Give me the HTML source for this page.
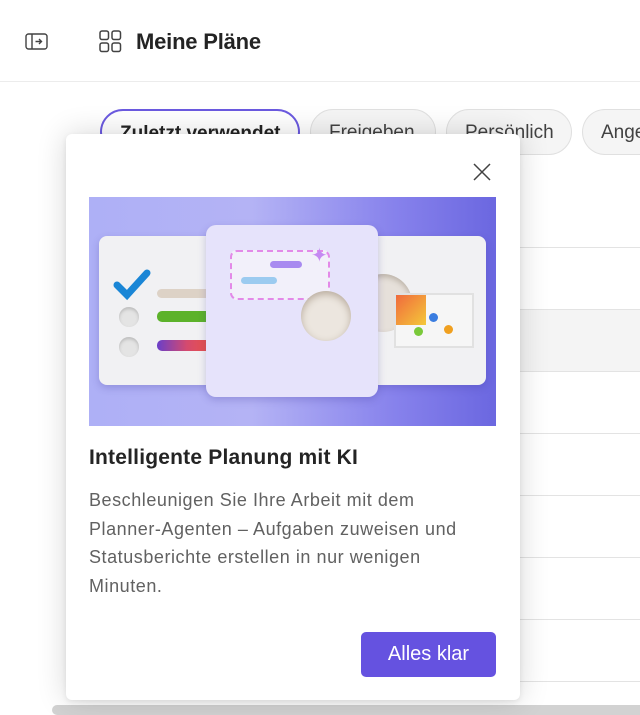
<!DOCTYPE html>
<html><head><meta charset="utf-8"><style>
*{margin:0;padding:0;box-sizing:border-box}
html,body{width:640px;height:715px;overflow:hidden}
body{background:#fff;font-family:"Liberation Sans",sans-serif;position:relative;color:#242424}
.wrap{position:absolute;left:0;top:0;width:640px;height:715px;overflow:hidden}
.hdr{position:absolute;left:0;top:0;width:640px;height:82px;border-bottom:1px solid #ececec}
.title{position:absolute;left:136px;top:29px;font-size:22px;font-weight:bold;letter-spacing:-0.2px}
.pill{position:absolute;top:109px;height:46px;border-radius:23px;border:1px solid #e0e0e0;background:#f5f5f5;font-size:19px;color:#424242;padding:12px 18px;white-space:nowrap;overflow:hidden}
.row{position:absolute;left:520px;width:120px;height:1px;background:#e3e3e3}
.pop{position:absolute;left:66px;top:134px;width:454px;height:566px;background:#fff;border-radius:6px;box-shadow:0 0 30px rgba(0,0,0,0.16),0 2px 6px rgba(0,0,0,0.08)}
.img{position:absolute;left:23px;top:63px;width:407px;height:229px;background:linear-gradient(90deg,#aeb0f6 0%,#b4b3f5 40%,#8782ec 75%,#6b67e0 100%);overflow:hidden}
.card{position:absolute;border-radius:8px;box-shadow:0 3px 8px rgba(60,50,150,0.25)}
.h{position:absolute;left:23px;top:312px;font-size:21px;font-weight:bold;color:#242424;letter-spacing:0.2px}
.b{position:absolute;left:23px;top:352px;font-size:18px;line-height:28.6px;color:#616161;white-space:nowrap;letter-spacing:0.55px}
.btn{position:absolute;left:295px;top:498px;width:135px;height:45px;border-radius:5px;background:#6552e0;color:#fff;font-size:20px;text-align:center;line-height:45px}
</style></head><body><div class="wrap">
<div class="hdr">
<svg style="position:absolute;left:25px;top:32px" width="24" height="20" viewBox="0 0 24 20"><rect x="1" y="2" width="21" height="15" rx="2.5" fill="none" stroke="#424242" stroke-width="1.4"/><line x1="7" y1="2" x2="7" y2="17" stroke="#424242" stroke-width="1.4"/><path d="M10.5 9.5h6M14 7l2.5 2.5L14 12" fill="none" stroke="#424242" stroke-width="1.4"/></svg>
<svg style="position:absolute;left:99px;top:30px" width="24" height="24" viewBox="0 0 24 24"><g fill="none" stroke="#424242" stroke-width="1.5"><rect x="1" y="1" width="8.5" height="8.5" rx="2"/><rect x="13" y="1" width="8.5" height="8.5" rx="2"/><rect x="1" y="13" width="8.5" height="8.5" rx="2"/><rect x="13" y="13" width="8.5" height="8.5" rx="2"/></g></svg>
<div class="title">Meine Pläne</div>
</div>
<div class="pill" style="left:100px;border:2px solid #6b5ae0;background:#fff;color:#242424;font-weight:bold;width:200px">Zuletzt verwendet</div>
<div class="pill" style="left:310px;width:126px">Freigeben</div>
<div class="pill" style="left:446px;width:126px">Persönlich</div>
<div class="pill" style="left:582px;width:58px;border-radius:23px 0 0 23px;border-right:none">Angeheftet</div>
<div style="position:absolute;left:520px;top:309px;width:120px;height:62px;background:#f4f4f4"></div>
<div class="row" style="top:247px"></div><div class="row" style="top:309px"></div><div class="row" style="top:371px"></div><div class="row" style="top:433px"></div><div class="row" style="top:495px"></div><div class="row" style="top:557px"></div><div class="row" style="top:619px"></div><div class="row" style="top:681px"></div>
<div style="position:absolute;left:52px;top:705px;width:588px;height:10px;background:#d2d2d2;border-radius:5px 0 0 5px"></div>
<div class="pop">
<svg style="position:absolute;left:407px;top:29px" width="18" height="18" viewBox="0 0 18 18"><path d="M1 1L17 17M17 1L1 17" stroke="#424242" stroke-width="1.5"/></svg>
<div class="img">
 <div class="card" style="left:10px;top:39px;width:387px;height:149px;background:#f1f1f3"></div>
 <svg style="position:absolute;left:24px;top:70px" width="40" height="36"><path d="M4 18L14 28L34 6" fill="none" stroke="#1a86d6" stroke-width="7" stroke-linecap="round"/></svg>
 <div style="position:absolute;left:30px;top:110px;width:20px;height:20px;border-radius:50%;background:#e4e4e4;box-shadow:inset 0 2px 3px #bbb"></div>
 <div style="position:absolute;left:30px;top:140px;width:20px;height:20px;border-radius:50%;background:#e4e4e4;box-shadow:inset 0 2px 3px #bbb"></div>
 <div style="position:absolute;left:68px;top:92px;width:60px;height:9px;border-radius:5px;background:#ddd2c6"></div>
 <div style="position:absolute;left:68px;top:114px;width:60px;height:11px;border-radius:5px;background:#5cb22a"></div>
 <div style="position:absolute;left:68px;top:143px;width:60px;height:11px;border-radius:5px;background:linear-gradient(90deg,#6a3fc9,#d54a6e,#f0553a)"></div>
 <div style="position:absolute;left:265px;top:77px;width:58px;height:58px;border-radius:50%;background:#e6e0da;box-shadow:inset 0 3px 6px #bcb3a8"></div>
 <div style="position:absolute;left:305px;top:96px;width:80px;height:55px;border:2px solid #e1e1e1;background:#f6f6f6"></div>
 <div style="position:absolute;left:307px;top:98px;width:30px;height:30px;background:linear-gradient(135deg,#f06a3c,#f4c83a)"></div>
 <div style="position:absolute;left:325px;top:130px;width:9px;height:9px;border-radius:50%;background:#7ac93a"></div>
 <div style="position:absolute;left:340px;top:116px;width:9px;height:9px;border-radius:50%;background:#3a7de0"></div>
 <div style="position:absolute;left:355px;top:128px;width:9px;height:9px;border-radius:50%;background:#f0a020"></div>
 <div class="card" style="left:117px;top:28px;width:172px;height:172px;background:#e6e3fb;border-radius:10px"></div>
 <div style="position:absolute;left:141px;top:53px;width:100px;height:50px;border-radius:7px;border:2px dashed #e38ae8;background:#f2f0fa"></div>
 <div style="position:absolute;left:181px;top:64px;width:32px;height:7px;border-radius:4px;background:#a88af0"></div>
 <div style="position:absolute;left:152px;top:80px;width:36px;height:7px;border-radius:4px;background:#9ccbf0"></div>
 <div style="position:absolute;left:212px;top:94px;width:50px;height:50px;border-radius:50%;background:#ece6df;box-shadow:inset 0 3px 8px #b8ab9d"></div>
 <div style="position:absolute;left:222px;top:46px;color:#c58af2;font-size:20px">✦</div>
</div>
<div class="h">Intelligente Planung mit KI</div>
<div class="b">Beschleunigen Sie Ihre Arbeit mit dem<br>Planner-Agenten – Aufgaben zuweisen und<br>Statusberichte erstellen in nur wenigen<br>Minuten.</div>
<div class="btn">Alles klar</div>
</div>
</div></body></html>
